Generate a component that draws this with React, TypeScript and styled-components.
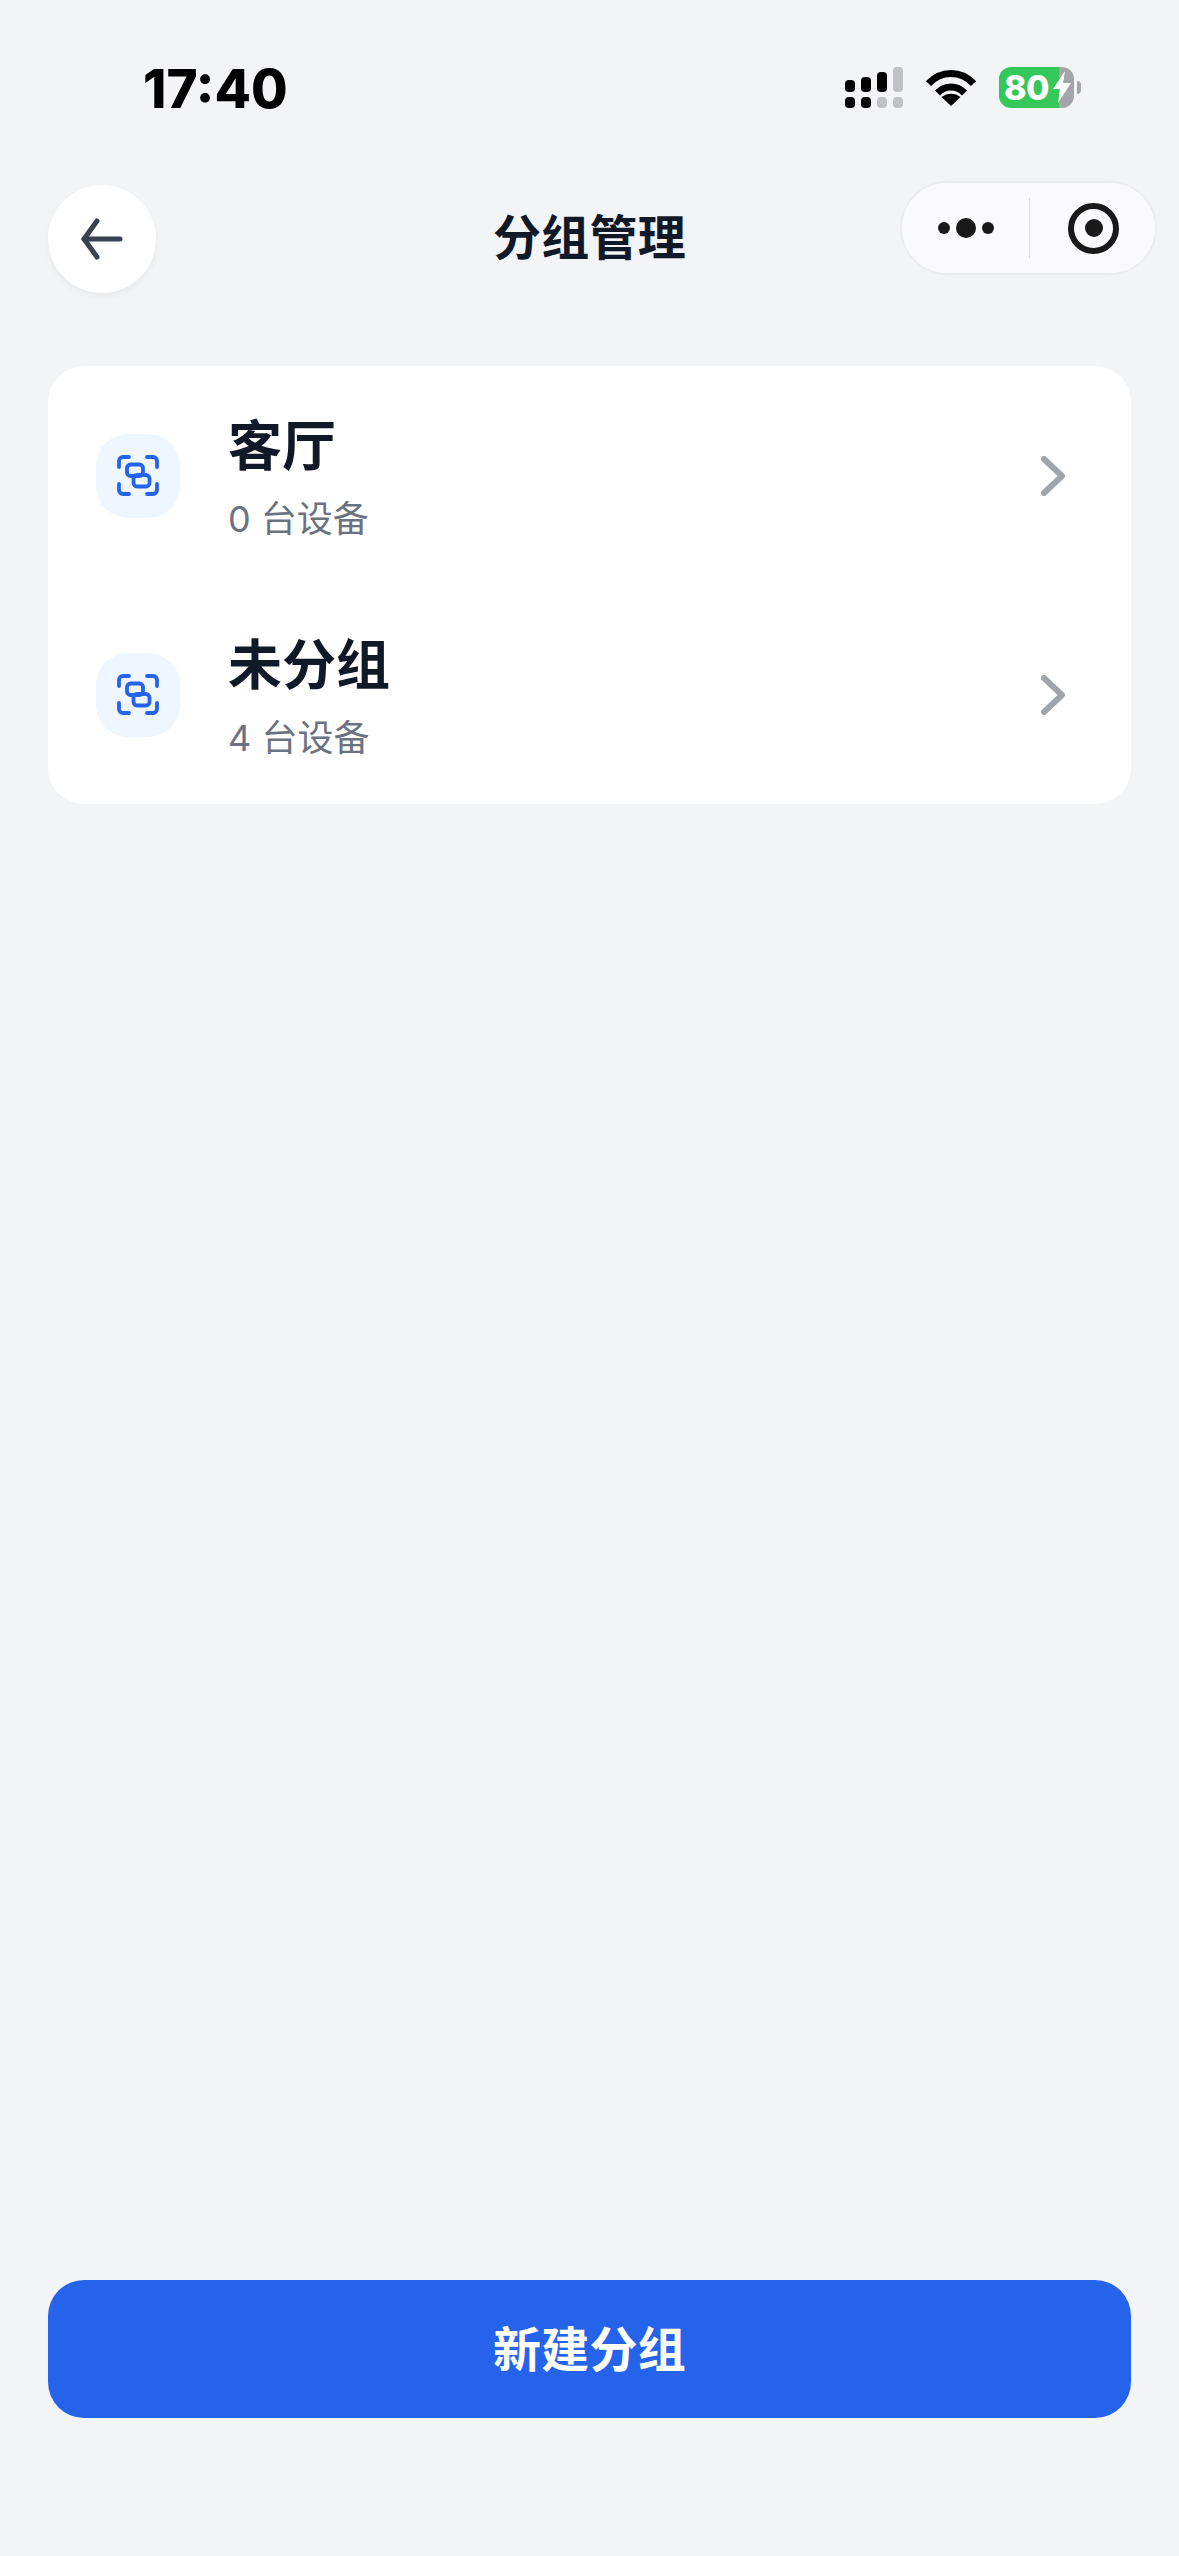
import * as React from "react";
import styled, { createGlobalStyle } from "styled-components";

const GlobalStyle = createGlobalStyle`
  html, body {
    margin: 0;
    padding: 0;
    background: #f3f4f6;
  }
  * {
    box-sizing: border-box;
  }
`;

const groups = [
  { name: "客厅", count: 0 },
  { name: "未分组", count: 4 }
];

const signalBars = [
  { x: 0, y: 13, h: 12, on: true },
  { x: 16, y: 10, h: 15, on: true },
  { x: 32, y: 5, h: 20, on: true },
  { x: 48, y: 0, h: 25, on: false }
];

const SignalIcon = () => (
  <svg width="58" height="41" viewBox="0 0 58 41">
    {signalBars.map(bar => (
      <rect
        key={bar.x}
        x={bar.x}
        y={bar.y}
        width="10"
        height={bar.h}
        rx="4"
        fill={bar.on ? "#000" : "#c0c1c5"}
      />
    ))}
    {[0, 16, 32, 48].map((x, i) => (
      <rect
        key={x}
        x={x}
        y="30"
        width="10"
        height="11"
        rx="4"
        fill={i < 2 ? "#000" : "#c0c1c5"}
      />
    ))}
  </svg>
);

const WifiIcon = () => (
  <svg width="50" height="37" viewBox="0 0 50 37" fill="none" stroke="#000">
    <path d="M2.5 14.5C15 1 35 1 47.5 14.5" strokeWidth="7" />
    <path d="M11.5 24C19 16 31 16 38.5 24" strokeWidth="7" />
    <path d="M25 37L15.5 28C21 23.5 29 23.5 34.5 28Z" fill="#000" stroke="none" />
  </svg>
);

const BoltIcon = () => (
  <svg width="18" height="32" viewBox="0 0 18 32">
    <path d="M12 0L0 18H7L5 32L18 12H10Z" fill="#fff" />
  </svg>
);

const BackIcon = () => (
  <svg
    width="42"
    height="42"
    viewBox="0 0 42 42"
    fill="none"
    stroke="#374151"
    strokeWidth="5"
    strokeLinecap="round"
    strokeLinejoin="round"
  >
    <path d="M39 21H3" />
    <path d="M16 3L3 21L16 39" />
  </svg>
);

const GroupIcon = () => (
  <svg
    width="42"
    height="42"
    viewBox="0 0 42 42"
    fill="none"
    stroke="#2563eb"
    strokeWidth="3.8"
    strokeLinecap="round"
  >
    <path d="M2 12V6a4 4 0 0 1 4-4h6" />
    <path d="M30 2h6a4 4 0 0 1 4 4v6" />
    <path d="M2 29v6a4 4 0 0 0 4 4h6" />
    <path d="M40 29v6a4 4 0 0 1-4 4h-6" />
    <rect x="10" y="9.5" width="16" height="11.5" rx="3.5" />
    <rect x="16.5" y="20" width="16" height="11.5" rx="3.5" />
  </svg>
);

const ChevronIcon = () => (
  <svg
    width="24"
    height="40"
    viewBox="0 0 24 40"
    fill="none"
    stroke="#a0a5ab"
    strokeWidth="6"
    strokeLinecap="round"
    strokeLinejoin="round"
  >
    <path d="M3 3L21 20L3 37" />
  </svg>
);

export default function App() {
  return (
    <Page>
      <GlobalStyle />
      <StatusBar>
        <Time>17:40</Time>
        <StatusIcons>
          <SignalIcon />
          <WifiIcon />
          <Battery>
            <BatteryBody>
              <BatteryText>80</BatteryText>
              <BoltIcon />
            </BatteryBody>
            <BatteryNub />
          </Battery>
        </StatusIcons>
      </StatusBar>

      <NavBar>
        <BackButton>
          <BackIcon />
        </BackButton>
        <PageTitle>分组管理</PageTitle>
        <Capsule>
          <MoreDots>
            <Dot />
            <Dot big={true} />
            <Dot />
          </MoreDots>
          <CapsuleDivider />
          <TargetRing>
            <TargetCore />
          </TargetRing>
        </Capsule>
      </NavBar>

      <Content>
        <GroupCard>
          {groups.map(group => (
            <GroupRow key={group.name}>
              <IconBox>
                <GroupIcon />
              </IconBox>
              <GroupInfo>
                <GroupName>{group.name}</GroupName>
                <GroupCount>{group.count} 台设备</GroupCount>
              </GroupInfo>
              <ChevronIcon />
            </GroupRow>
          ))}
        </GroupCard>
      </Content>

      <Footer>
        <CreateButton>新建分组</CreateButton>
      </Footer>
    </Page>
  );
}

const fontStack = `Inter, "Noto Sans CJK SC", sans-serif`;

const Page = styled.div`
  display: flex;
  flex-direction: column;
  width: 1179px;
  height: 2556px;
  overflow: hidden;
  background: #f3f4f6;
  font-family: ${fontStack};
`;

const StatusBar = styled.div`
  display: flex;
  align-items: center;
  justify-content: space-between;
  height: 181px;
  padding: 0 98px 3px 143px;
`;

const Time = styled.div`
  font-size: 53px;
  font-weight: 800;
  line-height: 60px;
  color: #000;
`;

const StatusIcons = styled.div`
  display: flex;
  align-items: center;
  gap: 23px;
  margin-bottom: 4px;
`;

const Battery = styled.div`
  display: flex;
  align-items: center;
  gap: 3px;
`;

const BatteryBody = styled.div`
  display: flex;
  align-items: center;
  width: 75px;
  height: 41px;
  padding-left: 5px;
  border-radius: 12px;
  background: linear-gradient(90deg, #34c759 80%, #a3a5aa 80%);
`;

const BatteryText = styled.span`
  width: 49px;
  font-size: 34px;
  font-weight: 800;
  line-height: 41px;
  letter-spacing: -0.5px;
  color: #fff;
`;

const BatteryNub = styled.div`
  width: 4px;
  height: 13px;
  border-radius: 0 4px 4px 0;
  background: #a3a5aa;
`;

const NavBar = styled.div`
  display: grid;
  grid-template-columns: 1fr auto 1fr;
  align-items: start;
  height: 112px;
  padding: 0 48px;
`;

const BackButton = styled.div`
  display: flex;
  align-items: center;
  justify-content: center;
  width: 108px;
  height: 108px;
  margin-top: 4px;
  border-radius: 50%;
  background: #fff;
  box-shadow: 0 3px 6px rgba(0, 0, 0, 0.05);
`;

const PageTitle = styled.div`
  margin-top: 24px;
  font-size: 48px;
  font-weight: 700;
  line-height: 66px;
  letter-spacing: 0.2px;
  color: #111827;
`;

const Capsule = styled.div`
  display: flex;
  align-items: center;
  justify-self: end;
  width: 257px;
  height: 94px;
  margin-right: -26px;
  border: 2px solid #ebedf1;
  border-radius: 47px;
  background: #fafafc;
`;

const MoreDots = styled.div`
  display: flex;
  align-items: center;
  justify-content: center;
  gap: 6px;
  width: 127px;
`;

const Dot = styled.span<{ big?: boolean }>`
  width: ${props => (props.big ? "20px" : "12px")};
  height: ${props => (props.big ? "20px" : "12px")};
  border-radius: 50%;
  background: #191919;
`;

const CapsuleDivider = styled.div`
  width: 1px;
  height: 60px;
  background: #d8dbe6;
`;

const TargetRing = styled.div`
  display: flex;
  align-items: center;
  justify-content: center;
  width: 51px;
  height: 51px;
  margin-left: 38px;
  border: 6px solid #191919;
  border-radius: 50%;
`;

const TargetCore = styled.span`
  width: 18px;
  height: 18px;
  border-radius: 50%;
  background: #191919;
`;

const Content = styled.div`
  flex: 1;
  padding: 73px 48px 0;
`;

const GroupCard = styled.div`
  border-radius: 36px;
  background: #fff;
`;

const GroupRow = styled.div`
  display: flex;
  align-items: center;
  height: 219px;
  padding: 0 66px 0 48px;
`;

const IconBox = styled.div`
  display: flex;
  align-items: center;
  justify-content: center;
  width: 84px;
  height: 84px;
  border-radius: 32px;
  background: #eff6ff;
`;

const GroupInfo = styled.div`
  display: flex;
  flex: 1;
  flex-direction: column;
  gap: 11px;
  margin-top: 4px;
  margin-left: 48px;
`;

const GroupName = styled.div`
  font-size: 54px;
  font-weight: 700;
  line-height: 72px;
  color: #111827;
`;

const GroupCount = styled.div`
  font-size: 36px;
  font-weight: 400;
  line-height: 50px;
  color: #6b7280;
`;

const Footer = styled.div`
  padding: 0 48px 138px;
`;

const CreateButton = styled.div`
  display: flex;
  align-items: center;
  justify-content: center;
  height: 138px;
  padding-bottom: 6px;
  border-radius: 36px;
  background: #2563eb;
  font-size: 48px;
  font-weight: 700;
  letter-spacing: 0.2px;
  color: #fff;
`;
